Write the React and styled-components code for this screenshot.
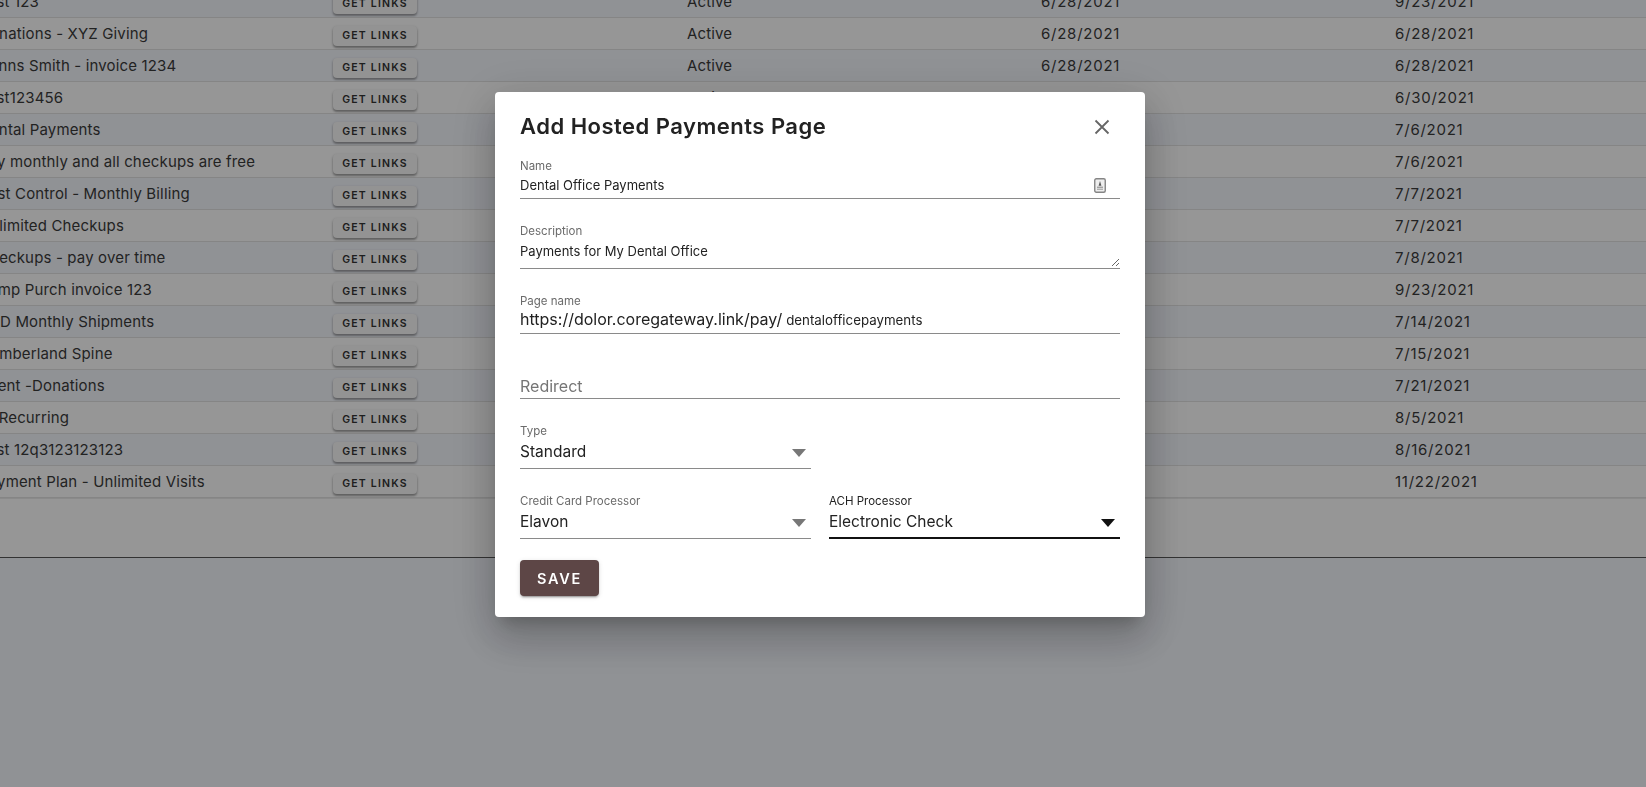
import React from 'react'
import styled, { createGlobalStyle } from 'styled-components'

const GlobalStyle = createGlobalStyle`
  html, body {
    margin: 0;
    height: 100%;
    overflow: hidden;
    background: #f0f3f9;
    font-family: "Inter", "Liberation Sans", sans-serif;
  }
`

const Page = styled.div`
  height: 787px;
  overflow: hidden;
`
const Table = styled.div`
  width: 1770px;
  margin: -14px 0 0 -21px;
  background: #fafafa;
  border-bottom: 1px solid #555;
`
const Row = styled.div`
  display: grid;
  grid-template-columns: repeat(5, 354px);
  align-items: center;
  height: 31px;
  border-bottom: 1px solid #dedede;
  background: ${props => (props.$odd ? '#f0f3f9' : '#fafafa')};
  font-size: 15px;
  letter-spacing: .15px;
  color: #3a3a3a;
`
const DateCell = styled.div`
  letter-spacing: .75px;
`
const TableFooter = styled.div`
  height: 58px;
  border-top: 1px solid #e6e6e6;
`
const LinksButton = styled.button`
  display: block;
  width: 84px;
  height: 20px;
  margin-top: 4px;
  padding: 0;
  border: none;
  border-radius: 4px;
  background: #f5f5f5;
  box-shadow: 0 2px 2px rgba(0,0,0,.25), 0 1px 3px rgba(0,0,0,.2);
  font-family: inherit;
  font-size: 10.5px;
  font-weight: 600;
  letter-spacing: 1.2px;
  color: #333;
`
const Backdrop = styled.div`
  position: fixed;
  inset: 0;
  display: flex;
  align-items: flex-start;
  padding: 92px 0 0 495px;
  background: rgba(0,0,0,.4);
`
const Modal = styled.div`
  box-sizing: border-box;
  width: 650px;
  height: 525px;
  padding: 19px 25px 0;
  background: #fff;
  border-radius: 4px;
  box-shadow: 0 11px 15px -7px rgba(0,0,0,.2), 0 24px 38px 3px rgba(0,0,0,.14), 0 9px 46px 8px rgba(0,0,0,.12);
`
const Header = styled.div`
  display: flex;
  align-items: center;
  justify-content: space-between;
  height: 30px;
  margin-bottom: 18px;
`
const Title = styled.h2`
  margin: 0;
  font-size: 22px;
  font-weight: 600;
  letter-spacing: .49px;
  color: #222;
`
const CloseButton = styled.button`
  display: flex;
  width: 16px;
  height: 16px;
  margin: 2px 10px 0 0;
  padding: 0;
  border: none;
  background: none;
`
const Field = styled.div`
  position: relative;
  height: ${props => props.$height}px;
  margin-bottom: ${props => props.$gap}px;
  border-bottom: ${props => (props.$active ? '2px solid #111' : '1px solid #8a8a8a')};
  box-sizing: border-box;
`
const Label = styled.div`
  height: 15px;
  font-size: 11.5px;
  line-height: 15px;
  color: ${props => (props.$active ? '#222' : '#6b6b6b')};
`
const Value = styled.div`
  display: flex;
  align-items: center;
  justify-content: space-between;
  margin-top: ${props => props.$top || 0}px;
  font-size: ${props => props.$size || 13}px;
  line-height: 20px;
  color: #222;
`
const IconSlot = styled.span`
  display: flex;
  margin-right: 14px;
`
const Domain = styled.span`
  font-size: 16px;
`
const Slug = styled.span`
  margin-left: 4px;
  font-size: 13.3px;
`
const Description = styled.textarea`
  display: block;
  box-sizing: border-box;
  width: 100%;
  height: 28px;
  padding: 2px 0 0;
  border: none;
  outline: none;
  background: none;
  resize: vertical;
  font-family: inherit;
  font-size: 13px;
  line-height: 20px;
  color: #222;
`
const Placeholder = styled.div`
  padding-top: 17px;
  font-size: 16px;
  line-height: 20px;
  color: #757575;
`
const SelectRow = styled.div`
  display: grid;
  grid-template-columns: 291px 291px;
  column-gap: 18px;
`
const Arrow = styled.span`
  width: 0;
  height: 0;
  margin: 2px 5px 0 0;
  border-left: 7.5px solid transparent;
  border-right: 7.5px solid transparent;
  border-top: 8px solid ${props => (props.$active ? '#111' : '#777')};
`
const SaveButton = styled.button`
  display: block;
  width: 79px;
  height: 36px;
  margin-top: 21px;
  padding: 0;
  border: none;
  border-radius: 4px;
  background: #5d4646;
  box-shadow: 0 3px 1px -2px rgba(0,0,0,.2), 0 2px 2px rgba(0,0,0,.14), 0 1px 5px rgba(0,0,0,.12);
  font-family: inherit;
  font-size: 14.5px;
  font-weight: 600;
  letter-spacing: 1.7px;
  color: #fff;
`

const rows = [
  ['Test 123', 'Active', '6/28/2021', '9/23/2021'],
  ['Donations - XYZ Giving', 'Active', '6/28/2021', '6/28/2021'],
  ['Danns Smith - invoice 1234', 'Active', '6/28/2021', '6/28/2021'],
  ['Test123456', 'Active', '6/30/2021', '6/30/2021'],
  ['Dental Payments', 'Active', '7/6/2021', '7/6/2021'],
  ['Pay monthly and all checkups are free', 'Active', '7/6/2021', '7/6/2021'],
  ['Pest Control - Monthly Billing', 'Active', '7/7/2021', '7/7/2021'],
  ['Unlimited Checkups', 'Active', '7/7/2021', '7/7/2021'],
  ['Checkups - pay over time', 'Active', '7/8/2021', '7/8/2021'],
  ['Pump Purch invoice 123', 'Active', '7/9/2021', '9/23/2021'],
  ['CBD Monthly Shipments', 'Active', '7/14/2021', '7/14/2021'],
  ['Cumberland Spine', 'Active', '7/15/2021', '7/15/2021'],
  ['Client -Donations', 'Active', '7/21/2021', '7/21/2021'],
  ['IC Recurring', 'Active', '8/5/2021', '8/5/2021'],
  ['Test 12q3123123123', 'Active', '8/16/2021', '8/16/2021'],
  ['Payment Plan - Unlimited Visits', 'Active', '11/22/2021', '11/22/2021'],
]

const CloseIcon = () => (
  <svg width="16" height="16" viewBox="0 0 16 16">
    <path d="M1.5 1.5L14.5 14.5M14.5 1.5L1.5 14.5" stroke="#666" strokeWidth="1.8" fill="none" />
  </svg>
)

const ContactCardIcon = () => (
  <svg width="12" height="15" viewBox="0 0 12 15">
    <rect x="0.75" y="0.75" width="10.5" height="13.5" rx="1.5" fill="#eeeeee" stroke="#858585" strokeWidth="1.4" />
    <path d="M6 3L7.4 7.8H4.6Z" fill="#555" />
    <rect x="3" y="8.6" width="6" height="1.3" fill="#999" />
    <rect x="3" y="10.6" width="6" height="1.3" fill="#aaa" />
  </svg>
)

const App = () => {
  return (
    <Page>
      <GlobalStyle />
      <Table>
        {rows.map((row, i) => (
          <Row key={row[0]} $odd={i % 2 === 0}>
            <div>{row[0]}</div>
            <div><LinksButton>GET LINKS</LinksButton></div>
            <div>{row[1]}</div>
            <DateCell>{row[2]}</DateCell>
            <DateCell>{row[3]}</DateCell>
          </Row>
        ))}
        <TableFooter />
      </Table>
      <Backdrop>
        <Modal>
          <Header>
            <Title>Add Hosted Payments Page</Title>
            <CloseButton><CloseIcon /></CloseButton>
          </Header>
          <Field $height={40} $gap={25}>
            <Label>Name</Label>
            <Value $top={1}>Dental Office Payments <IconSlot><ContactCardIcon /></IconSlot></Value>
          </Field>
          <Field $height={45} $gap={25}>
            <Label>Description</Label>
            <Description readOnly defaultValue="Payments for My Dental Office" />
          </Field>
          <Field $height={40} $gap={25}>
            <Label>Page name</Label>
            <Value><span><Domain>https://dolor.coregateway.link/pay/</Domain><Slug>dentalofficepayments</Slug></span></Value>
          </Field>
          <Field $height={40} $gap={25}>
            <Placeholder>Redirect</Placeholder>
          </Field>
          <SelectRow>
            <Field $height={45} $gap={25}>
              <Label>Type</Label>
              <Value $size={15.5} $top={3}>Standard <Arrow /></Value>
            </Field>
            <div />
          </SelectRow>
          <SelectRow>
            <Field $height={45} $gap={0}>
              <Label>Credit Card Processor</Label>
              <Value $size={15.5} $top={3}>Elavon <Arrow /></Value>
            </Field>
            <Field $height={45} $gap={0} $active>
              <Label $active>ACH Processor</Label>
              <Value $size={15.5} $top={3}>Electronic Check <Arrow $active /></Value>
            </Field>
          </SelectRow>
          <SaveButton>SAVE</SaveButton>
        </Modal>
      </Backdrop>
    </Page>
  )
}

export default App
